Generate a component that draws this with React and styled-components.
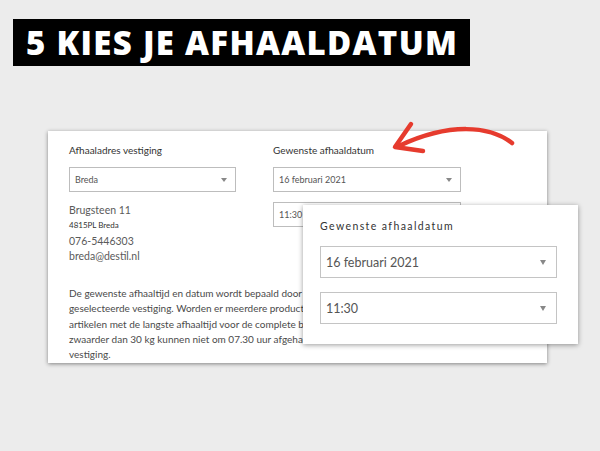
import React from 'react'
import styled, { createGlobalStyle } from 'styled-components'

const Global = createGlobalStyle`
    html, body {
        margin: 0;
        padding: 0;
        background: #ececec;
    }
    body {
        font-family: Lato, "Liberation Sans", sans-serif;
    }
`

function Select({ value, big }) {
    return (
        <SelectBox big={big}>
            <span>{value}</span>
            <Caret big={big} />
        </SelectBox>
    )
}

function App() {
    return (
        <Page>
            <Global />
            <Title>5 KIES JE AFHAALDATUM</Title>

            <Stage>
                <Card>
                    <Columns>
                        <Column>
                            <Label>Afhaaladres vestiging</Label>
                            <Select value="Breda" />
                            <Address>
                                <p>Brugsteen 11</p>
                                <p className='small'>4815PL Breda</p>
                                <p>076-5446303</p>
                                <p>breda@destil.nl</p>
                            </Address>
                        </Column>
                        <Column wide>
                            <Label>Gewenste afhaaldatum</Label>
                            <Select value="16 februari 2021" />
                            <Select value="11:30" />
                        </Column>
                    </Columns>

                    <Paragraph>
                        De gewenste afhaaltijd en datum wordt bepaald door de levertijd bij de<br />
                        geselecteerde vestiging. Worden er meerdere producten besteld, dan<br />
                        artikelen met de langste afhaaltijd voor de complete bestelling. Artikelen<br />
                        zwaarder dan 30 kg kunnen niet om 07.30 uur afgehaald worden in de<br />
                        vestiging.
                    </Paragraph>
                </Card>

                <Popup>
                    <PopupLabel>Gewenste afhaaldatum</PopupLabel>
                    <Select big value="16 februari 2021" />
                    <Select big value="11:30" />
                </Popup>
            </Stage>

            <Arrow viewBox="0 0 600 451" width="600" height="451">
                <path d="M512 143 C 490 126, 450 122, 399 146" fill="none" stroke="#e63b2e" strokeWidth="4.5" strokeLinecap="round" />
                <path d="M411 124 L 395 147 L 423 151" fill="none" stroke="#e63b2e" strokeWidth="4.5" strokeLinecap="round" strokeLinejoin="round" />
            </Arrow>
        </Page>
    )
}

const Page = styled.div`
    position: relative;
    width: 600px;
    height: 451px;
    overflow: hidden;
    display: flex;
    flex-direction: column;
    align-items: flex-start;
`

const Title = styled.h1`
    margin: 19px 0 0 13px;
    height: 47px;
    padding: 0 12px 0 13px;
    box-sizing: border-box;
    background: #000;
    color: #fff;
    font-family: "Open Sans", Lato, sans-serif;
    font-weight: 800;
    font-size: 33px;
    letter-spacing: 1.3px;
    line-height: 47px;
    white-space: nowrap;
`

const Stage = styled.div`
    position: relative;
    margin: 65px 0 0 48px;
`

const Card = styled.div`
    width: 499px;
    height: 232px;
    box-sizing: border-box;
    padding: 13px 21px 0;
    background: #fff;
    box-shadow: 0 1px 4px rgba(0, 0, 0, .45);
    overflow: hidden;
`

const Columns = styled.div`
    display: flex;
    gap: 37px;
`

const Column = styled.div`
    width: ${props => props.wide ? '188px' : '167px'};
    display: flex;
    flex-direction: column;
    gap: 10px;
`

const Label = styled.div`
    font-size: 10px;
    color: #333;
    height: 12px;
    line-height: 12px;
    margin-bottom: 1px;
`

const SelectBox = styled.div`
    height: ${props => props.big ? '32px' : '25px'};
    box-sizing: border-box;
    border: 1px solid ${props => props.big ? '#c4c4c4' : '#bdbdbd'};
    background: #fff;
    display: flex;
    align-items: center;
    justify-content: space-between;
    padding: ${props => props.big ? '0 10px 0 5px' : '0 8px 0 5px'};
    font-size: ${props => props.big ? '12.5px' : '9px'};
    color: #555;
`

const Caret = styled.i`
    width: 0;
    height: 0;
    border-left: ${props => props.big ? '3.5px' : '3px'} solid transparent;
    border-right: ${props => props.big ? '3.5px' : '3px'} solid transparent;
    border-top: ${props => props.big ? '5px' : '4px'} solid #888;
`

const Address = styled.div`
    margin-top: 1px;
    font-size: 10.5px;
    color: #5a5a5a;
    line-height: 15.3px;
    p {
        margin: 0;
    }
    .small {
        font-size: 8px;
        color: #333;
    }
`

const Paragraph = styled.p`
    margin: 22px 0 0;
    font-size: 10px;
    line-height: 15.3px;
    color: #4a4a4a;
    white-space: nowrap;
`

const Popup = styled.div`
    position: absolute;
    left: 255px;
    top: 74px;
    width: 275px;
    height: 139px;
    box-sizing: border-box;
    padding: 14px 21px 0 17px;
    background: #fff;
    box-shadow: 0 1px 5px rgba(0, 0, 0, .4);
    display: flex;
    flex-direction: column;
    gap: 14px;
`

const PopupLabel = styled.div`
    font-size: 10.5px;
    letter-spacing: 1.4px;
    color: #333;
    height: 14px;
    line-height: 14px;
    margin-bottom: -1px;
`

const Arrow = styled.svg`
    position: absolute;
    left: 0;
    top: 0;
    pointer-events: none;
`

export default App
